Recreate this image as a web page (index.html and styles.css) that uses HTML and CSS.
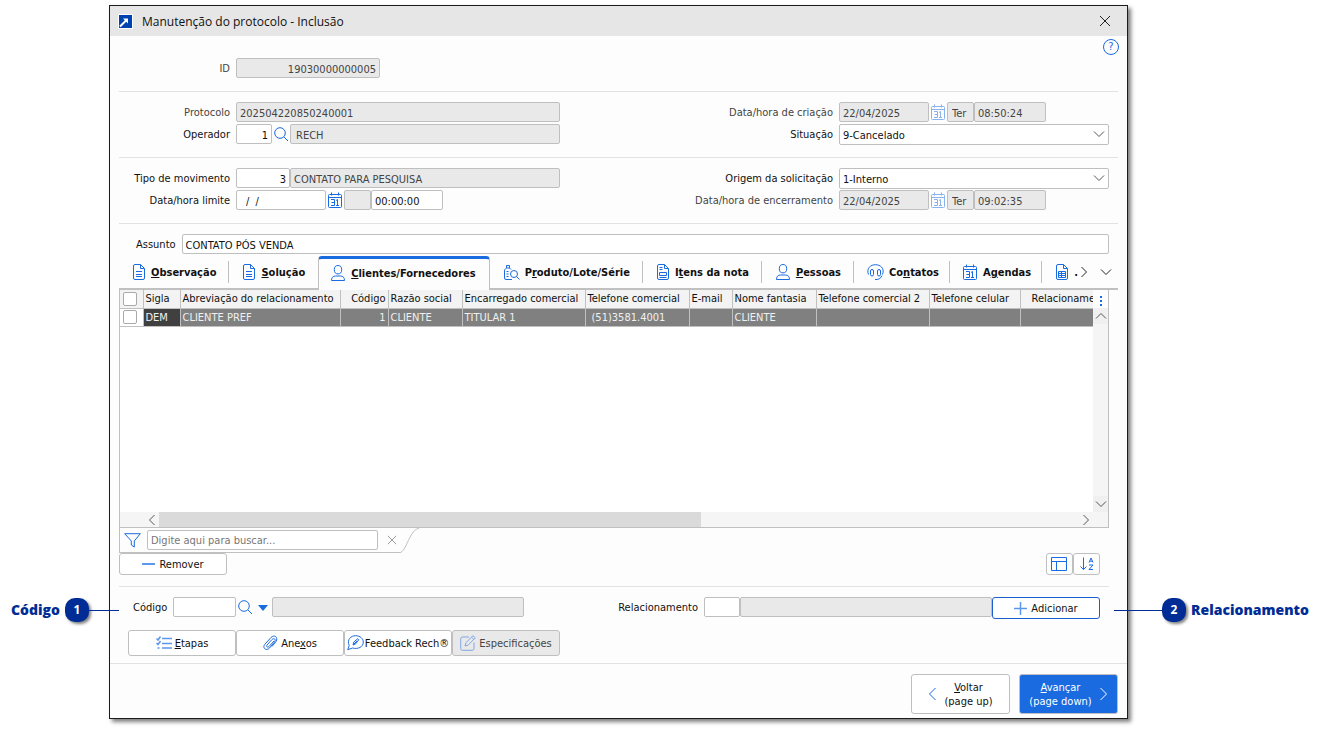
FILE: index.html
```html
<!DOCTYPE html>
<html lang="pt-BR">
<head>
    <meta charset="UTF-8">
    <meta name="viewport" content="width=device-width, initial-scale=1.0">
    <title>Manutenção do protocolo - Inclusão</title>
    <link rel="stylesheet" href="styles.css">
</head>
<body>
    <!-- Shared icons -->
    <svg class="icon-defs" aria-hidden="true">
        <symbol id="i-search" viewBox="0 0 15 15"><circle cx="6" cy="6" r="5.3"/><path d="M10 10l4 4"/></symbol>
        <symbol id="i-calendar" viewBox="0 0 15 17"><rect x="0.5" y="2.5" width="13" height="13" rx="1"/><path d="M0.5 5.5h13M3.5 0.5v3M10.5 0.5v3M3 7.5h3.5v6H3M3.5 10.5h3M8 8.5l1.5-1v6M8 13.5h3"/></symbol>
        <symbol id="i-down" viewBox="0 0 12 8"><path d="M1 1.5l5 5 5-5"/></symbol>
        <symbol id="i-up" viewBox="0 0 12 8"><path d="M1 6.5l5-5 5 5"/></symbol>
        <symbol id="i-left" viewBox="0 0 8 12"><path d="M6.5 1l-5 5 5 5"/></symbol>
        <symbol id="i-right" viewBox="0 0 8 12"><path d="M1.5 1l5 5-5 5"/></symbol>
        <symbol id="i-close" viewBox="0 0 12 12"><path d="M1 1l10 10M11 1L1 11"/></symbol>
        <symbol id="i-doc" viewBox="0 0 13 17"><path d="M7.5 0.5H2A1.5 1.5 0 0 0 0.5 2v12A1.5 1.5 0 0 0 2 15.5h8A1.5 1.5 0 0 0 11.5 14V4.5zM7.5 0.5v4h4M3 7.5h6M3 10.5h6M3 12.5h6"/></symbol>
        <symbol id="i-form" viewBox="0 0 13 17"><path d="M7.5 0.5H2A1.5 1.5 0 0 0 0.5 2v12A1.5 1.5 0 0 0 2 15.5h8A1.5 1.5 0 0 0 11.5 14V4.5zM7.5 0.5v4h4M2.5 3.5h3M2.5 5.5h3M2.5 11.5v-3h7v3zM2.5 13.5h7"/></symbol>
        <symbol id="i-grid" viewBox="0 0 13 17"><path d="M7.5 0.5H2A1.5 1.5 0 0 0 0.5 2v12A1.5 1.5 0 0 0 2 15.5h8A1.5 1.5 0 0 0 11.5 14V4.5zM7.5 0.5v4h4M2.5 7.5h7v6h-7zM2.5 9.5h7M2.5 11.5h7M5.5 7.5v6"/></symbol>
        <symbol id="i-person" viewBox="0 0 15 17"><ellipse cx="7" cy="4.7" rx="3.7" ry="4.2"/><path d="M0.5 15.5c0-3 1.5-4.5 4-4.5h5c2.5 0 4 1.5 4 4.5z"/></symbol>
        <symbol id="i-product" viewBox="0 0 16 16"><path d="M2.5 0.5h3V3h-3zM2.5 3C1.5 3.5 0.5 4.5 0.5 6v7A1.5 1.5 0 0 0 2 14.5h6M5.5 3L7 4.5M2.5 6.5h2M2.5 9h2M2.5 11.5h2"/><circle cx="10" cy="9" r="3.5"/><path d="M12.5 11.5l3 3"/></symbol>
        <symbol id="i-headset" viewBox="0 0 17 17"><path d="M1.5 10.5C-1 4 4 0.7 8.5 0.7S18 4 15.500 10.5M8 15.5c3 0.5 6-1 7-4"/><rect x="3.5" y="5.5" width="3" height="6.5" rx="1.5"/><rect x="10.5" y="5.5" width="3" height="6.5" rx="1.5"/></symbol>
        <symbol id="i-minus" viewBox="0 0 13 13"><path d="M0 6h13" stroke-width="2"/></symbol>
        <symbol id="i-plus" viewBox="0 0 13 13"><path d="M0 6.5h13M6.5 0v13" stroke-width="1.5"/></symbol>
        <symbol id="i-filter" viewBox="0 0 17 15"><path d="M0.7 0.7h15.6L10.3 8v6l-3-2V8z"/></symbol>
        <symbol id="i-layout" viewBox="0 0 17 15"><path d="M0.5 0.5h15v13h-15zM0.5 4.5h15M5.5 4.5v9"/></symbol>
        <symbol id="i-sort" viewBox="0 0 14 14"><path d="M3.5 0.5v12M0.5 9.5l3 3 3-3M9 5.5l2-4.5 2 4.5M9.7 4.2h2.6M9 8h4l-4 4.5h4"/></symbol>
        <symbol id="i-steps" viewBox="0 0 16 14"><path d="M0.5 2.5L2 4l2.500-3.500M0.5 7L2 8.5l2.500-3.500M1.5 12h2M6 2.5h10M6 7.5h10M6 12h10" stroke-width="1.5"/></symbol>
        <symbol id="i-clip" viewBox="0 0 15 16"><path d="M11 6l-5 5.5c-1.5 1.5-3.200 0-2-1.500L9 4.500c2-2 4.500 0 2.500 2.500L6.500 13c-3 3.500-7.500 0-4.800-3.500L8 2.500c3.500-3.500 7.500 0 5 4L9 11.500"/></symbol>
        <symbol id="i-feedback" viewBox="0 0 17 16"><path d="M0.7 14.7l1.5-4.200C-0.500 4.500 4 0.700 8.500 0.700c5 0 7.800 3.300 7.800 6.300 0 5-5.300 7.500-10.800 6zM6 10l0.800-3 4-3.300 1 1-3.300 4.300zM7 9l3-3"/></symbol>
        <symbol id="i-edit" viewBox="0 0 16 16"><path d="M9 2H2.5A1.8 1.8 0 0 0 0.7 3.8v9.7a1.8 1.8 0 0 0 1.8 1.8h9.700a1.8 1.8 0 0 0 1.8-1.8V7.5M5 11l0.800-3.200L13 0.700l2.300 2.200-7.300 7.300zM11.5 2.200l2.300 2.300"/></symbol>
    </svg>

    <main class="window">
        <header class="titlebar">
            <svg class="logo" viewBox="0 0 15 15"><rect width="15" height="15" fill="#fff"/><rect x="1" y="1" width="13" height="13" fill="#0042b0"/><path d="M2 12.500L8.500 6" stroke="#fff" stroke-width="2"/><path d="M5 4.500h5v5z" fill="#fff"/></svg>
            <h1>Manutenção do protocolo - Inclusão</h1>
            <button type="button" class="close" aria-label="Fechar"><svg class="icon" width="12" height="12"><use href="#i-close"/></svg></button>
        </header>

        <form class="content">
            <button type="button" class="help" aria-label="Ajuda">?</button>

            <section class="group group-first">
                <label class="muted" for="id">ID</label>
                <div class="field"><input class="w-id num" id="id" type="text" value="19030000000005" disabled></div>
            </section>

            <section class="group">
                <label class="muted" for="protocolo">Protocolo</label>
                <div class="field"><input class="grow" id="protocolo" type="text" value="202504220850240001" disabled></div>
                <label class="muted" for="criacao">Data/hora de criação</label>
                <div class="field">
                    <input class="w-date" id="criacao" type="text" value="22/04/2025" disabled>
                    <button type="button" class="lookup" aria-label="Calendário" disabled><svg class="icon" width="15" height="17"><use href="#i-calendar"/></svg></button>
                    <input class="w-day" type="text" value="Ter" aria-label="Dia da criação" disabled>
                    <input class="w-time" type="text" value="08:50:24" aria-label="Hora da criação" disabled>
                </div>

                <label for="operador">Operador</label>
                <div class="field">
                    <input class="w-op num" id="operador" type="text" value="1">
                    <button type="button" class="lookup" aria-label="Pesquisar operador"><svg class="icon" width="15" height="15"><use href="#i-search"/></svg></button>
                    <input class="grow indent" type="text" value="RECH" aria-label="Nome do operador" disabled>
                </div>
                <label for="situacao">Situação</label>
                <div class="field select">
                    <select id="situacao"><option>9-Cancelado</option></select>
                    <svg class="icon" width="12" height="8"><use href="#i-down"/></svg>
                </div>
            </section>

            <section class="group">
                <label for="tipo">Tipo de movimento</label>
                <div class="field">
                    <input class="w-type num" id="tipo" type="text" value="3">
                    <input class="grow" type="text" value="CONTATO PARA PESQUISA" aria-label="Descrição do movimento" disabled>
                </div>
                <label for="origem">Origem da solicitação</label>
                <div class="field select">
                    <select id="origem"><option>1-Interno</option></select>
                    <svg class="icon" width="12" height="8"><use href="#i-down"/></svg>
                </div>

                <label for="limite">Data/hora limite</label>
                <div class="field">
                    <input class="w-date date-empty" id="limite" type="text" value="/  /">
                    <button type="button" class="lookup" aria-label="Calendário"><svg class="icon" width="15" height="17"><use href="#i-calendar"/></svg></button>
                    <input class="w-day" type="text" aria-label="Dia limite" disabled>
                    <input class="w-time" type="text" value="00:00:00" aria-label="Hora limite">
                </div>
                <label class="muted" for="encerramento">Data/hora de encerramento</label>
                <div class="field">
                    <input class="w-date" id="encerramento" type="text" value="22/04/2025" disabled>
                    <button type="button" class="lookup" aria-label="Calendário" disabled><svg class="icon" width="15" height="17"><use href="#i-calendar"/></svg></button>
                    <input class="w-day" type="text" value="Ter" aria-label="Dia do encerramento" disabled>
                    <input class="w-time" type="text" value="09:02:35" aria-label="Hora do encerramento" disabled>
                </div>
            </section>

            <div class="subject">
                <label for="assunto">Assunto</label>
                <input class="grow" id="assunto" type="text" value="CONTATO PÓS VENDA">
            </div>

            <!-- Tabs -->
            <nav class="tabs">
                <button type="button" class="tab"><svg class="icon" width="13" height="17"><use href="#i-doc"/></svg><span><u>O</u>bservação</span></button>
                <button type="button" class="tab no-line"><svg class="icon" width="13" height="17"><use href="#i-doc"/></svg><span><u>S</u>olução</span></button>
                <button type="button" class="tab active"><svg class="icon" width="15" height="17"><use href="#i-person"/></svg><span><u>C</u>lientes/Fornecedores</span></button>
                <button type="button" class="tab"><svg class="icon" width="16" height="16"><use href="#i-product"/></svg><span>P<u>r</u>oduto/Lote/Série</span></button>
                <button type="button" class="tab"><svg class="icon" width="13" height="17"><use href="#i-form"/></svg><span>I<u>t</u>ens da nota</span></button>
                <button type="button" class="tab"><svg class="icon" width="15" height="17"><use href="#i-person"/></svg><span><u>P</u>essoas</span></button>
                <button type="button" class="tab tab-narrow"><svg class="icon" width="17" height="17"><use href="#i-headset"/></svg><span>Co<u>n</u>tatos</span></button>
                <button type="button" class="tab tab-narrow"><svg class="icon" width="15" height="17"><use href="#i-calendar"/></svg><span>A<u>g</u>endas</span></button>
                <button type="button" class="tab tab-last no-line"><svg class="icon" width="13" height="17"><use href="#i-grid"/></svg><span>.</span></button>
                <div class="tab-arrows">
                    <button type="button" aria-label="Próximas abas"><svg class="icon" width="8" height="12"><use href="#i-right"/></svg></button>
                    <button type="button" aria-label="Todas as abas"><svg class="icon" width="12" height="8"><use href="#i-down"/></svg></button>
                </div>
            </nav>

            <!-- Grid -->
            <div class="grid">
                <div class="grid-view">
                    <table>
                        <thead>
                            <tr>
                                <th class="c-check"><input type="checkbox" aria-label="Selecionar todos"></th>
                                <th class="c-sigla">Sigla</th>
                                <th class="c-abrev">Abreviação do relacionamento</th>
                                <th class="c-codigo num">Código</th>
                                <th class="c-razao">Razão social</th>
                                <th class="c-encarregado">Encarregado comercial</th>
                                <th class="c-telefone">Telefone comercial</th>
                                <th class="c-email">E-mail</th>
                                <th class="c-fantasia">Nome fantasia</th>
                                <th class="c-telefone2">Telefone comercial 2</th>
                                <th class="c-celular">Telefone celular</th>
                                <th class="c-relac">Relacionamento</th>
                            </tr>
                        </thead>
                        <tbody>
                            <tr>
                                <td><input type="checkbox" aria-label="Selecionar DEM"></td>
                                <td class="current">DEM</td>
                                <td>CLIENTE PREF</td>
                                <td class="num">1</td>
                                <td>CLIENTE</td>
                                <td>TITULAR 1</td>
                                <td class="phone">(51)3581.4001</td>
                                <td></td>
                                <td>CLIENTE</td>
                                <td></td>
                                <td></td>
                                <td></td>
                            </tr>
                        </tbody>
                    </table>
                </div>
                <div class="vscroll">
                    <button type="button" class="menu" aria-label="Opções da grade"><svg width="2" height="10" fill="#1a6ae0"><rect width="2" height="2"/><rect y="4" width="2" height="2"/><rect y="8" width="2" height="2"/></svg></button>
                    <button type="button" aria-label="Rolar para cima"><svg class="icon" width="12" height="8"><use href="#i-up"/></svg></button>
                    <button type="button" class="last" aria-label="Rolar para baixo"><svg class="icon" width="12" height="8"><use href="#i-down"/></svg></button>
                </div>
                <div class="hscroll">
                    <button type="button" aria-label="Rolar para a esquerda"><svg class="icon" width="8" height="12"><use href="#i-left"/></svg></button>
                    <div class="track"><div class="thumb"></div></div>
                    <button type="button" aria-label="Rolar para a direita"><svg class="icon" width="8" height="12"><use href="#i-right"/></svg></button>
                </div>
            </div>

            <div class="filter">
                <div class="filter-box">
                    <svg class="icon" width="17" height="15"><use href="#i-filter"/></svg>
                    <input type="text" placeholder="Digite aqui para buscar..." aria-label="Buscar">
                    <button type="button" aria-label="Limpar busca"><svg class="icon" width="10" height="10"><use href="#i-close"/></svg></button>
                </div>
                <svg class="slope" width="20" height="25" viewBox="0 0 20 25"><path d="M0 24.5C6 24.5 10 0.5 19 0.5"/></svg>
            </div>

            <div class="actions">
                <button type="button" class="btn btn-small"><svg class="icon light" width="13" height="13"><use href="#i-minus"/></svg><span>Remover</span></button>
                <div class="tools">
                    <button type="button" class="btn" aria-label="Layout"><svg class="icon" width="17" height="15"><use href="#i-layout"/></svg></button>
                    <button type="button" class="btn" aria-label="Ordenar"><svg class="icon" width="14" height="14"><use href="#i-sort"/></svg></button>
                </div>
            </div>

            <div class="entry">
                <div class="callout callout-left"><b>Código</b><span class="badge">1</span><i></i></div>
                <label for="codigo">Código</label>
                <input class="w-code" id="codigo" type="text">
                <button type="button" class="lookup" aria-label="Pesquisar código"><svg class="icon" width="15" height="15"><use href="#i-search"/></svg></button>
                <button type="button" class="lookup caret" aria-label="Mais opções"><svg width="10" height="6"><path d="M0 0h10L5 6z" fill="#1a6ae0"/></svg></button>
                <input class="w-desc" type="text" aria-label="Descrição do código" disabled>
                <label class="push" for="relacionamento">Relacionamento</label>
                <input class="w-op" id="relacionamento" type="text">
                <input class="w-desc" type="text" aria-label="Descrição do relacionamento" disabled>
                <button type="button" class="btn btn-small btn-add"><svg class="icon light" width="13" height="13"><use href="#i-plus"/></svg><span>Adicionar</span></button>
                <div class="callout callout-right"><i></i><span class="badge">2</span><b>Relacionamento</b></div>
            </div>

            <div class="options">
                <button type="button" class="btn"><svg class="icon light" width="16" height="14"><use href="#i-steps"/></svg><span><u>E</u>tapas</span></button>
                <button type="button" class="btn"><svg class="icon" width="15" height="16"><use href="#i-clip"/></svg><span>Ane<u>x</u>os</span></button>
                <button type="button" class="btn btn-tight"><svg class="icon" width="17" height="16"><use href="#i-feedback"/></svg><span>Feedback Rech®</span></button>
                <button type="button" class="btn" disabled><svg class="icon" width="16" height="16"><use href="#i-edit"/></svg><span>Especificações</span></button>
            </div>
        </form>

        <footer class="footer">
            <button type="button" class="btn"><svg class="icon" width="9" height="14" viewBox="0 0 9 14"><path d="M7.5 1l-6 6 6 6"/></svg><span><u>V</u>oltar<br>(page up)</span></button>
            <button type="button" class="btn primary"><span><u>A</u>vançar<br>(page down)</span><svg class="icon" width="9" height="14" viewBox="0 0 9 14"><path d="M1.5 1l6 6-6 6"/></svg></button>
        </footer>
    </main>
</body>
</html>
```

FILE: styles.css
```css
* {
    box-sizing: border-box;
}
body {
    margin: 0;
    background: #fff;
    color: #111;
    font: 11px/16px "DejaVu Sans Condensed", "DejaVu Sans", sans-serif;
}
input, select, button {
    font: inherit;
    color: inherit;
    margin: 0;
}
button {
    display: flex;
    align-items: center;
    justify-content: center;
    flex: none;
    padding: 0;
    border: none;
    background: none;
}
input[type="text"], select {
    height: 20px;
    min-width: 0;
    padding: 2px 3px 0;
    border: 1px solid #bfbfbf;
    border-radius: 2px;
    background: #fff;
}
input[type="text"]:disabled {
    background: #e9e9e9;
    color: #444;
}
label {
    padding-top: 2px;
    text-align: right;
    white-space: nowrap;
}
.muted {
    color: #444;
}
.grow {
    flex: 1;
}
.icon-defs {
    display: none;
}
.icon {
    flex: none;
    fill: none;
    stroke: #1a6ae0;
}
.light {
    stroke: #5b97ec;
}

/* Window */
.window {
    display: flex;
    flex-direction: column;
    min-height: calc(100vh - 21px);
    margin: 5px 194px 16px 109px;
    border: 1px solid #1c1c1c;
    background: #fdfdfd;
    box-shadow: 3px 3px 4px rgba(0, 0, 0, 0.5);
}
.titlebar {
    display: flex;
    align-items: center;
    gap: 9px;
    height: 30px;
    padding: 0 8px;
    background: #e6e6e6;
}
.titlebar h1 {
    flex: 1;
    margin: 0;
    padding-top: 2px;
    font: 12px/16px "Open Sans", sans-serif;
}
.logo {
    width: 15px;
    height: 15px;
}
.close {
    width: 28px;
    height: 28px;
}
.close .icon {
    stroke: #222;
}
.content {
    position: relative;
    display: flex;
    flex-direction: column;
    flex: 1;
    padding: 0 9px 7px;
}
.help {
    position: absolute;
    top: 3px;
    right: 8px;
    width: 16px;
    height: 16px;
    border: 1px solid #1a6ae0;
    border-radius: 50%;
    color: #1a6ae0;
}

/* Form */
.group {
    display: grid;
    grid-template-columns: 111px 324px 1fr 270px;
    grid-auto-rows: 20px;
    gap: 2px 6px;
    align-items: center;
    padding: 10px 9px 13px 0;
    border-bottom: 1px solid #e2e2e2;
}
.group-first {
    padding-top: 22px;
}
.field {
    display: flex;
    height: 20px;
}
.num {
    text-align: right;
}
.indent {
    padding-left: 5px !important;
}
.date-empty {
    padding-left: 9px !important;
    white-space: pre;
}
.w-id {
    width: 144px;
}
.w-op {
    width: 36px;
}
.w-type {
    width: 54px;
}
.w-date {
    width: 90px;
}
.w-day {
    width: 27px;
}
.w-time {
    width: 72px;
}
.w-code {
    width: 63px;
}
.w-desc {
    flex: 0 1 252px;
}
.w-day:disabled {
    padding-left: 4px;
}
.lookup {
    width: 18px;
    height: 20px;
}
.lookup:disabled .icon {
    opacity: 0.5;
}
.select {
    position: relative;
}
.select select {
    appearance: none;
    width: 100%;
    height: 21px;
}
.select .icon {
    position: absolute;
    top: 6px;
    right: 4px;
    stroke: #555;
    pointer-events: none;
}
.subject {
    display: flex;
    align-items: center;
    gap: 6px;
    padding: 10px 9px 2px 17px;
}

/* Tabs */
.tabs {
    display: flex;
    height: 34px;
    border-bottom: 2px solid #c0c0c0;
    font-weight: bold;
}
.tab {
    position: relative;
    gap: 5px;
    padding: 1px 13px 0 14px;
}
.tab-narrow {
    padding: 1px 11px 0 13px;
}
.tab-last {
    padding-right: 0;
}
.tab span {
    padding-top: 1px;
}
.tab::after {
    content: "";
    position: absolute;
    right: 0;
    top: 5px;
    height: 22px;
    border-right: 1px solid #c0c0c0;
}
.tab.no-line::after, .tab.active::after {
    display: none;
}
.tab.active {
    height: 34px;
    padding: 0 13px 3px 12px;
    border: 1px solid #c0c0c0;
    border-top: 3px solid #1a6ae0;
    border-bottom: none;
    border-radius: 4px 4px 0 0;
    background: #fdfdfd;
}
.tab-arrows {
    display: flex;
    gap: 12px;
    margin-left: auto;
    padding-right: 6px;
}
.tab-arrows .icon {
    stroke: #222;
}

/* Grid */
.grid {
    display: grid;
    grid-template-columns: 1fr 15px;
    grid-template-rows: 1fr 15px;
    flex: 1;
    min-height: 160px;
    margin-right: 9px;
    border: 1px solid #c0c0c0;
    border-top: none;
    background: #fff;
}
.grid-view {
    overflow: hidden;
}
table {
    width: 100%;
    table-layout: fixed;
    border-collapse: collapse;
}
th, td {
    height: 18px;
    padding: 0 2px;
    border-right: 1px solid #c0c0c0;
    border-bottom: 1px solid #c0c0c0;
    font-weight: normal;
    text-align: left;
    white-space: nowrap;
    overflow: hidden;
}
th {
    background: #f3f3f3;
}
td {
    padding-top: 1px;
    background: #808080;
    color: #f0f0f0;
}
th.num, td.num {
    text-align: right;
}
td:first-child {
    padding-top: 0;
    background: #fff;
}
td.current {
    background: #404040;
}
td.phone {
    padding-left: 6px;
}
th:last-child, td:last-child {
    border-right: none;
}
th.c-relac {
    padding-left: 11px;
}
input[type="checkbox"] {
    appearance: none;
    display: block;
    width: 14px;
    height: 14px;
    margin-left: 1px;
    border: 1px solid #aaa;
    border-radius: 2px;
    background: #fff;
}
.c-check {
    width: 23px;
}
.c-sigla {
    width: 37px;
}
.c-abrev {
    width: 160px;
}
.c-codigo {
    width: 48px;
}
.c-razao {
    width: 74px;
}
.c-encarregado {
    width: 123px;
}
.c-telefone {
    width: 104px;
}
.c-email {
    width: 43px;
}
.c-fantasia {
    width: 84px;
}
.c-telefone2 {
    width: 113px;
}
.c-celular {
    width: 91px;
}
.vscroll {
    display: flex;
    flex-direction: column;
    background: #f5f5f5;
}
.vscroll button {
    height: 16px;
    background: #f0f0f0;
}
.vscroll .menu {
    height: 18px;
    padding-top: 3px;
    background: #fdfdfd;
}
.vscroll .last {
    margin-top: auto;
}
.vscroll .icon, .hscroll .icon {
    stroke: #555;
}
.hscroll {
    grid-column: 1 / 3;
    display: flex;
    padding: 0 15px 0 24px;
    background: #f5f5f5;
}
.hscroll button {
    width: 15px;
}
.track {
    flex: 1;
}
.thumb {
    width: 59%;
    height: 15px;
    background: #dadada;
}

/* Search bar under the grid */
.filter {
    display: flex;
}
.filter-box {
    display: flex;
    align-items: center;
    width: 281px;
    height: 25px;
    padding-left: 4px;
    border-left: 1px solid #c0c0c0;
    border-bottom: 1px solid #c0c0c0;
}
.filter-box input[type="text"] {
    flex: 1;
    margin-left: 6px;
    padding-top: 0;
}
.filter-box input::placeholder {
    color: #777;
}
.filter-box button {
    width: 28px;
    height: 20px;
    margin-right: -6px;
}
.filter-box button .icon {
    stroke: #888;
}
.slope {
    fill: none;
    stroke: #c0c0c0;
}

/* Buttons */
.btn {
    gap: 3px;
    border: 1px solid #bfbfbf;
    border-radius: 3px;
    background: #fff;
    line-height: 14px;
    white-space: nowrap;
}
.btn span {
    padding-top: 2px;
}
.btn:disabled {
    background: #e9e9e9;
    color: #444;
}
.btn:disabled .icon {
    opacity: 0.5;
}
.btn-small {
    width: 108px;
    height: 22px;
    gap: 4px;
}
.btn-tight {
    gap: 1px;
}
.btn-add {
    align-self: flex-start;
    border-color: #1a5fd0;
}
.actions {
    display: flex;
    justify-content: space-between;
    margin-right: 9px;
    padding: 0 9px 11px 0;
    border-bottom: 1px solid #e2e2e2;
}
.tools {
    display: flex;
}
.tools .btn {
    width: 27px;
    height: 22px;
}
.entry {
    position: relative;
    display: flex;
    height: 43px;
    margin-right: 9px;
    padding: 10px 9px 0 14px;
}
.entry label {
    margin-right: 6px;
    line-height: 18px;
}
.entry .push {
    margin-left: auto;
}
.caret {
    margin-top: 1px;
}
.options {
    display: flex;
    padding-left: 9px;
}
.options .btn {
    width: 108px;
    height: 26px;
}
.footer {
    display: flex;
    justify-content: flex-end;
    gap: 9px;
    padding: 10px 9px 4px;
    border-top: 1px solid #e2e2e2;
}
.footer .btn {
    gap: 7px;
    width: 99px;
    height: 40px;
}
.footer .btn span {
    padding-top: 1px;
}
.footer .primary {
    border-color: #c0c0c0;
    background: #1a6ae0;
    color: #fff;
}
.footer .primary .icon {
    stroke: #fff;
}

/* Numbered callouts beside the window */
.callout {
    position: absolute;
    top: 11px;
    display: flex;
    align-items: center;
    color: #002c95;
    font: bold 14px/24px "Open Sans", sans-serif;
}
.callout-left {
    right: 100%;
}
.callout-right {
    left: calc(100% + 5px);
}
.callout i {
    width: 48px;
    border-top: 1px solid #002c95;
}
.callout-left i {
    width: 30px;
}
.callout b {
    margin: 0 5px;
}
.badge {
    width: 24px;
    height: 24px;
    border-radius: 10px;
    background: #002c95;
    box-shadow: 2px 2px 3px rgba(0, 0, 0, 0.5);
    color: #fff;
    font-size: 12px;
    text-align: center;
}
```
